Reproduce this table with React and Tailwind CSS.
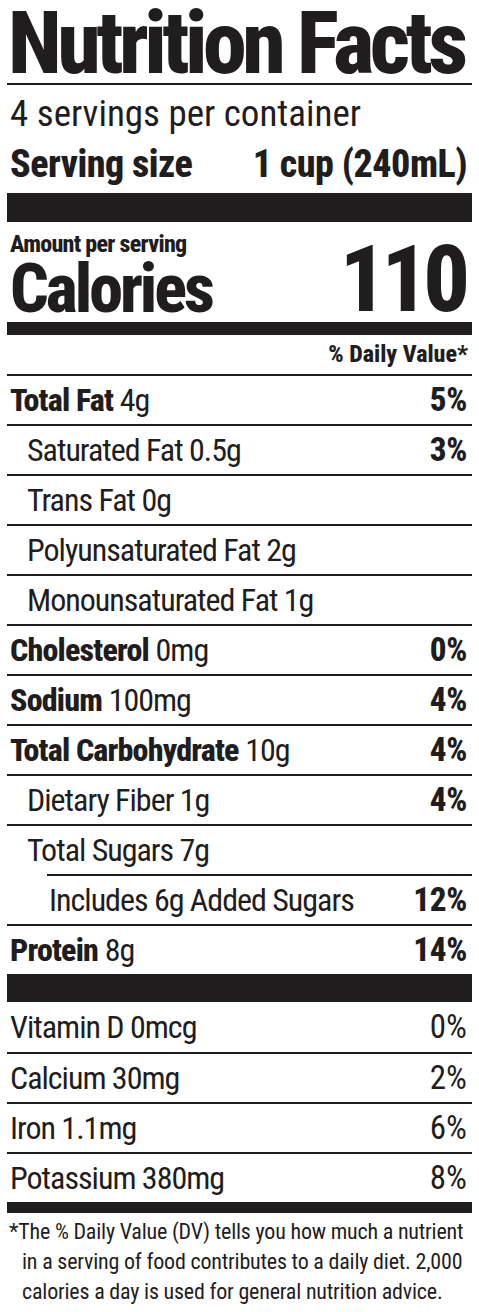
import React from "react";

const rows = [
  { b: "Total Fat", v: "4g", p: "5%", indent: 0 },
  { b: "", v: "Saturated Fat 0.5g", p: "3%", indent: 1 },
  { b: "", v: "Trans Fat 0g", p: "", indent: 1 },
  { b: "", v: "Polyunsaturated Fat 2g", p: "", indent: 1 },
  { b: "", v: "Monounsaturated Fat 1g", p: "", indent: 1 },
  { b: "Cholesterol", v: "0mg", p: "0%", indent: 0 },
  { b: "Sodium", v: "100mg", p: "4%", indent: 0 },
  { b: "Total Carbohydrate", v: "10g", p: "4%", indent: 0 },
  { b: "", v: "Dietary Fiber 1g", p: "4%", indent: 1 },
  { b: "", v: "Total Sugars 7g", p: "", indent: 1 },
  { b: "", v: "Includes 6g Added Sugars", p: "12%", indent: 2 },
  { b: "Protein", v: "8g", p: "14%", indent: 0 },
];

const vitamins = [
  { v: "Vitamin D 0mcg", p: "0%" },
  { v: "Calcium 30mg", p: "2%" },
  { v: "Iron 1.1mg", p: "6%" },
  { v: "Potassium 380mg", p: "8%" },
];

function Row({ r }) {
  const line =
    r.indent === 2 ? (
      <div className="ml-[40px] h-[2px] bg-[#1f1d1d]" />
    ) : (
      <div className="h-[2px] bg-[#1f1d1d]" />
    );
  const pad =
    r.indent === 0 ? "pl-[3px]" : r.indent === 1 ? "pl-[20px]" : "pl-[42px]";
  return (
    <div className="h-[50px]">
      {line}
      <div
        className={`flex justify-between h-[48px] leading-[48px] text-[32px] pr-[5px] ${pad}`}
      >
        <span className="whitespace-nowrap tracking-[-1px]">
          {r.b && <span className="font-extrabold tracking-[-0.8px]">{r.b} </span>}
          {r.v}
        </span>
        <span className="font-extrabold text-[33px] tracking-[-0.3px]">{r.p}</span>
      </div>
    </div>
  );
}

export default function App() {
  return (
    <div className="w-[479px] h-[1312px] bg-white text-[#1f1d1d] px-[7px] font-['Roboto',sans-serif] [font-stretch:75%] overflow-hidden">
      <h1 className="h-[83px] text-[88px] leading-[86px] font-extrabold tracking-[-4.5px] pl-[1px] whitespace-nowrap">
        Nutrition Facts
      </h1>
      <div className="h-[2px] bg-[#1f1d1d]" />
      <div className="pt-[4px] pl-[3px] pr-[5px]">
        <div className="h-[50px] leading-[50px] text-[37px] whitespace-nowrap">
          4 servings per container
        </div>
        <div className="h-[50px] leading-[50px] text-[38px] flex justify-between font-extrabold tracking-[-0.5px] whitespace-nowrap">
          <span>Serving size</span>
          <span>1 cup (240mL)</span>
        </div>
      </div>
      <div className="mt-[4px] h-[29px] bg-[#1f1d1d]" />
      <div className="h-[100px] flex justify-between pl-[3px]">
        <div className="flex flex-col">
          <div className="pt-[10px] text-[24px] leading-[24px] font-extrabold tracking-[-0.7px] whitespace-nowrap">
            Amount per serving
          </div>
          <div className="text-[68px] leading-[66px] font-extrabold tracking-[-3px] whitespace-nowrap">
            Calories
          </div>
        </div>
        <div className="self-end text-[92px] leading-[84px] font-extrabold tracking-[-5px] pr-[7px]">
          110
        </div>
      </div>
      <div className="h-[13px] bg-[#1f1d1d]" />
      <div className="h-[39px] leading-[39px] text-[24px] font-extrabold text-right pr-[4px]">
        % Daily Value*
      </div>
      {rows.map((r, i) => (
        <Row key={i} r={r} />
      ))}
      <div className="h-[28px] bg-[#1f1d1d]" />
      {vitamins.map((v, i) => (
        <div key={i} className="h-[50px]">
          {i > 0 && <div className="h-[2px] bg-[#1f1d1d]" />}
          <div
            className={`flex justify-between ${i > 0 ? "h-[48px] leading-[48px]" : "h-[50px] leading-[50px]"} text-[32px] pl-[3px] pr-[5px]`}
          >
            <span className="whitespace-nowrap tracking-[-1px]">{v.v}</span>
            <span className="text-[33px]">{v.p}</span>
          </div>
        </div>
      ))}
      <div className="h-[11px] bg-[#1f1d1d]" />
      <p className="pt-[4px] text-[22px] leading-[30px] pl-[15px] indent-[-13px] tracking-[-0.2px] whitespace-nowrap">
        *The % Daily Value (DV) tells you how much a nutrient
        <br />
        in a serving of food contributes to a daily diet. 2,000
        <br />
        calories a day is used for general nutrition advice.
      </p>
    </div>
  );
}
